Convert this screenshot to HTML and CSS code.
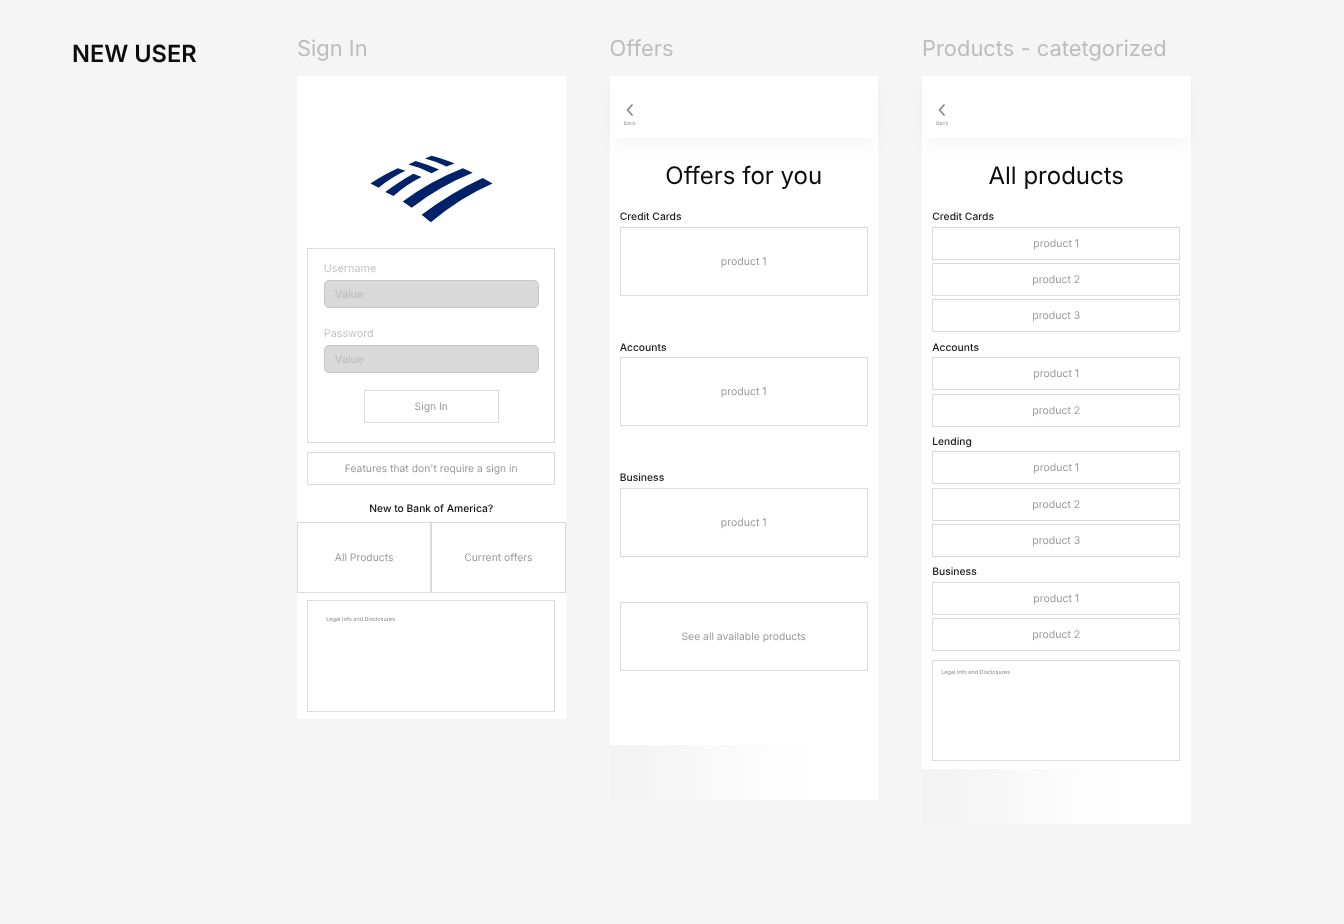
FILE: index.html
```html
<!DOCTYPE html>
<html lang="en">
<head>
<meta charset="utf-8">
<title>New user flow</title>
<link rel="stylesheet" href="styles.css">
</head>
<body>
<main class="board">
  <h1 class="flow-name">NEW USER</h1>

  <section class="col">
    <h2 class="col-title">Sign In</h2>
    <div class="frame signin">
      <svg class="logo" viewBox="215 68 380 212" aria-label="Bank of America logo">
        <path d="M385 82 L405 73 Q445 83 475 97 L450 106 Q420 91 385 82Z"/>
        <path d="M335 100 L357 89 Q395 100 428 115 L405 126 Q372 109 335 100Z"/>
        <path d="M220 157 Q265 128 303 111 L326 119 Q285 138 245 170Z"/>
        <path d="M265 183 Q310 150 350 128 L375 138 Q330 160 290 195Z"/>
        <path d="M318 212 Q400 150 500 111 L530 125 Q430 165 345 231Z"/>
        <path d="M375 252 Q465 185 560 141 L590 157 Q490 200 403 275Z"/>
      </svg>
      <div class="box login">
        <div class="field-label">Username</div>
        <div class="input">Value</div>
        <div class="field-label second">Password</div>
        <div class="input">Value</div>
        <div class="box signin-btn">Sign In</div>
      </div>
      <div class="box features">Features that don't require a sign in</div>
      <div class="new-to">New to Bank of America?</div>
      <div class="split">
        <div class="box split-cell">All Products</div>
        <div class="box split-cell">Current offers</div>
      </div>
      <div class="box legal legal-signin">Legal Info and Disclosures</div>
    </div>
  </section>

  <section class="col">
    <h2 class="col-title">Offers</h2>
    <div class="frame offers">
      <header class="topbar">
        <svg class="chevron" viewBox="0 0 12 14"><path d="M8.5 1.5 L3.5 7 L8.5 12.5"/></svg>
        <span class="back">Back</span>
      </header>
      <div class="page-title">Offers for you</div>
      <div class="cat">Credit Cards</div>
      <div class="box tall">product 1</div>
      <div class="cat offer-cat">Accounts</div>
      <div class="box tall">product 1</div>
      <div class="cat offer-cat">Business</div>
      <div class="box tall">product 1</div>
      <div class="box tall see-all">See all available products</div>
    </div>
    <div class="fade"></div>
  </section>

  <section class="col">
    <h2 class="col-title">Products - catetgorized</h2>
    <div class="frame products">
      <header class="topbar">
        <svg class="chevron" viewBox="0 0 12 14"><path d="M8.5 1.5 L3.5 7 L8.5 12.5"/></svg>
        <span class="back">Back</span>
      </header>
      <div class="page-title">All products</div>
      <div class="cat">Credit Cards</div>
      <div class="stack">
        <div class="box short">product 1</div>
        <div class="box short">product 2</div>
        <div class="box short">product 3</div>
      </div>
      <div class="cat prod-cat">Accounts</div>
      <div class="stack">
        <div class="box short">product 1</div>
        <div class="box short">product 2</div>
      </div>
      <div class="cat prod-cat">Lending</div>
      <div class="stack">
        <div class="box short">product 1</div>
        <div class="box short">product 2</div>
        <div class="box short">product 3</div>
      </div>
      <div class="cat prod-cat">Business</div>
      <div class="stack">
        <div class="box short">product 1</div>
        <div class="box short">product 2</div>
      </div>
      <div class="box legal legal-products">Legal Info and Disclosures</div>
    </div>
    <div class="fade"></div>
  </section>
</main>
</body>
</html>
```
FILE: styles.css
```css
* { box-sizing: border-box; }
html, body { margin: 0; height: 100%; }
body {
  background: #f5f5f5;
  font-family: Inter, "Liberation Sans", sans-serif;
  color: #a6a6a6;
  overflow: hidden;
  text-rendering: geometricPrecision;
}
.board {
  display: flex;
  align-items: flex-start;
  gap: 44px;
  padding: 34px 0 0 72px;
  height: 100%;
  filter: blur(.3px);
}
.flow-name {
  width: 181px;
  margin: 5px 0 0;
  font-size: 23.6px;
  line-height: 30px;
  font-weight: 600;
  color: #0c0c0c;
}
.col { width: 268.5px; flex: none; }
.col-title {
  margin: 1px 0 13px;
  font-size: 21.9px;
  line-height: 28px;
  font-weight: 400;
  color: #bdbdbd;
}
.frame { background: #fff; display: flex; flex-direction: column; padding: 0 10.25px; }
.box {
  border: 1.5px solid #dadada;
  background: #fff;
  display: flex;
  align-items: center;
  justify-content: center;
  font-size: 10.35px;
  color: #9a9a9a;
}

/* Sign in */
.signin { height: 643px; }
.logo { width: 127px; height: 70px; margin: 78px auto 0; display: block; flex: none; }
.logo path { fill: #012169; }
.login {
  display: block;
  height: 195px;
  margin-top: 24px;
  padding: 13px 15.5px 0;
}
.field-label { font-size: 10.8px; line-height: 13px; color: #c4c4c4; }
.field-label.second { margin-top: 19px; }
.input {
  height: 28px;
  margin-top: 5px;
  padding: 0 10px;
  display: flex;
  align-items: center;
  background: #d9d9d9;
  border: 1px solid #c6c6c6;
  border-radius: 5px;
  font-size: 11px;
  color: #bababa;
}
.signin-btn { width: 135px; height: 33px; margin: 17px auto 0; }
.features { height: 33px; margin-top: 9px; }
.new-to {
  margin-top: 17px;
  height: 14px;
  font-size: 10.3px;
  line-height: 14px;
  font-weight: 500;
  color: #111;
  text-align: center;
}
.split { display: flex; margin: 6px -10.25px 0; height: 71px; }
.split-cell { flex: 1; }
.legal {
  display: block;
  padding: 13px 0 0 18px;
  font-size: 5.5px;
  line-height: 12px;
  color: #8c8c8c;
}
.legal-signin { height: 112px; margin-top: 7px; }
.legal-products { height: 101px; margin-top: 9.6px; padding-left: 8px; padding-top: 6px; }

/* Offers + products */
.topbar {
  height: 62px;
  margin: 0 -10.25px;
  padding: 27px 0 0 14px;
  background: #fff;
  box-shadow: 0 8px 16px rgba(0, 0, 0, .035);
  display: flex;
  flex-direction: column;
  align-items: flex-start;
  flex: none;
}
.chevron { width: 12px; height: 14px; }
.chevron path { fill: none; stroke: #808080; stroke-width: 1.5; }
.back { font-size: 5.3px; line-height: 8px; color: #999; margin-top: 3px; width: 12px; text-align: center; }
.page-title {
  margin-top: 21.6px;
  height: 32px;
  font-size: 24px;
  line-height: 32px;
  color: #0d0d0d;
  text-align: center;
}
.cat {
  margin-top: 18.9px;
  margin-bottom: 1.5px;
  height: 15px;
  font-size: 10.3px;
  line-height: 15px;
  font-weight: 500;
  color: #1a1a1a;
}
.tall { height: 69px; font-size: 10.5px; }
.offer-cat { margin-top: 45px; margin-bottom: 1.3px; }
.see-all { margin-top: 45.5px; font-size: 10.35px; }
.offers { height: 669px; }
.products { height: 693px; }
.stack { display: flex; flex-direction: column; gap: 3.25px; }
.short { height: 33px; font-size: 10.5px; }
.prod-cat { margin-top: 8.4px; margin-bottom: 1.4px; }
.fade {
  height: 55px;
  background: linear-gradient(90deg, #f2f2f2 0%, #fcfcfc 55%, #fff 80%);
}
```
